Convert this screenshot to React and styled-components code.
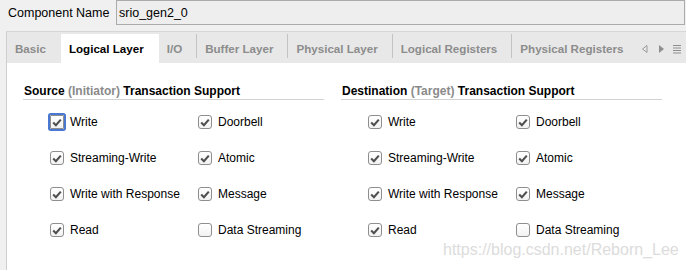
import React from 'react';
import styled, { createGlobalStyle } from 'styled-components';

const GlobalStyle = createGlobalStyle`
  body {
    margin: 0;
    background: #f0f0f0;
    font-family: "Liberation Sans", Arial, sans-serif;
    font-size: 12px;
    color: #000;
  }
`;

const Page = styled.div`
  width: 686px;
  height: 270px;
  overflow: hidden;
  display: flex;
  flex-direction: column;
  background: #f0f0f0;
`;

const NameRow = styled.div`
  display: flex;
  align-items: center;
  height: 26px;
  padding-left: 8px;
`;

const NameLabel = styled.span`
  width: 108px;
  font-size: 12.5px;
`;

const NameInput = styled.div`
  box-sizing: border-box;
  width: 569px;
  height: 25px;
  margin-top: -1px;
  display: flex;
  align-items: center;
  padding-left: 2px;
  background: #eeeeee;
  border: 1px solid #ababab;
  font-size: 12.5px;
`;

const Panel = styled.div`
  flex: 1;
  margin-top: 5px;
  margin-left: 6px;
  display: flex;
  flex-direction: column;
  border-left: 1px solid #cfcfcf;
  border-top: 1px solid #d6d6d6;
`;

const TabBar = styled.div`
  height: 31px;
  display: flex;
  align-items: flex-end;
  background: #e8e8e8;
`;

const Tab = styled.div`
  position: relative;
  flex-shrink: 0;
  height: 29px;
  display: flex;
  align-items: center;
  padding: 0 15px 0 8px;
  font-size: 11.6px;
  font-weight: bold;
  color: ${(p) => (p.active ? '#000' : '#8c8c8c')};
  background: ${(p) => (p.active ? '#fff' : 'transparent')};
  white-space: nowrap;

  &::after {
    content: '';
    display: ${(p) => (p.sep ? 'block' : 'none')};
    position: absolute;
    right: 0;
    top: 0;
    bottom: 5px;
    width: 1px;
    background: #c4c4c4;
  }
`;

const TabTools = styled.div`
  margin-left: auto;
  flex-shrink: 0;
  height: 29px;
  display: flex;
  align-items: center;
  padding-right: 4px;

  svg {
    display: block;
  }
`;

const Content = styled.div`
  position: relative;
  flex: 1;
  background: #fff;
  display: flex;
  padding: 20px 0 0 16px;
  gap: 17px;
`;

const Section = styled.div`
  width: ${(p) => p.width}px;
`;

const SectionTitle = styled.div`
  line-height: 16px;
  font-weight: bold;
  border-bottom: 1px solid #d2d2d2;
  padding-left: 1px;
`;

const Muted = styled.span`
  color: #8a8a8a;
`;

const Options = styled.div`
  margin-top: 4px;
  padding-left: 27px;
  display: grid;
  grid-template-columns: 148px 1fr;
  grid-auto-rows: 36px;
`;

const Option = styled.label`
  display: flex;
  align-items: center;
  gap: 6px;
  white-space: nowrap;
`;

const Box = styled.span`
  box-sizing: border-box;
  width: 14px;
  height: 14px;
  display: flex;
  align-items: center;
  justify-content: center;
  border: 1px solid #8e8e8e;
  background: linear-gradient(#ffffff, #f2f2f2);
  box-shadow: ${(p) => (p.focus ? '0 0 0 2px #4a78d0' : 'none')};
  border-radius: ${(p) => (p.focus ? '1px' : '3px')};
`;

const Watermark = styled.div`
  position: absolute;
  left: 436px;
  top: 178px;
  font-size: 16px;
  color: #dcdcdc;
  pointer-events: none;
`;

const CheckBox = ({ checked, focus }) => (
  <Box focus={focus}>
    {checked && (
      <svg width="10" height="9" viewBox="0 0 10 9">
        <path d="M1.2 4.6 L3.9 7.2 L8.8 1.6" fill="none" stroke="#4f4f4f" strokeWidth="2.1" />
      </svg>
    )}
  </Box>
);

const tabs = [
  { name: 'Basic' },
  { name: 'Logical Layer', active: true },
  { name: 'I/O', sep: true },
  { name: 'Buffer Layer', sep: true },
  { name: 'Physical Layer', sep: true },
  { name: 'Logical Registers', sep: true },
  { name: 'Physical Registers' },
];

const options = [
  ['Write', true],
  ['Doorbell', true],
  ['Streaming-Write', true],
  ['Atomic', true],
  ['Write with Response', true],
  ['Message', true],
  ['Read', true],
  ['Data Streaming', false],
];

const OptionGrid = ({ focusFirst }) => (
  <Options>
    {options.map(([label, checked], i) => (
      <Option key={label}>
        <CheckBox checked={checked} focus={focusFirst && i === 0} />
        {label}
      </Option>
    ))}
  </Options>
);

const App = () => (
  <Page>
    <GlobalStyle />
    <NameRow>
      <NameLabel>Component Name</NameLabel>
      <NameInput>srio_gen2_0</NameInput>
    </NameRow>
    <Panel>
      <TabBar>
        {tabs.map((t) => (
          <Tab key={t.name} active={t.active} sep={t.sep}>
            {t.name}
          </Tab>
        ))}
        <TabTools>
          <svg width="14" height="12" viewBox="0 0 14 12">
            <path d="M7 2.5 L2.5 6 L7 9.5 Z" fill="none" stroke="#9a9a9a" strokeWidth="1" />
          </svg>
          <svg width="16" height="12" viewBox="0 0 16 12">
            <path d="M5 2 L10 6 L5 10 Z" fill="#8f8f8f" />
          </svg>
          <svg width="12" height="12" viewBox="0 0 12 12">
            <path d="M3 2.5 H11 M3 5 H11 M3 7.5 H11 M3 10 H11" stroke="#8f8f8f" strokeWidth="1.2" />
          </svg>
        </TabTools>
      </TabBar>
      <Content>
        <Section width={301}>
          <SectionTitle>
            Source <Muted>(Initiator)</Muted> Transaction Support
          </SectionTitle>
          <OptionGrid focusFirst />
        </Section>
        <Section width={321}>
          <SectionTitle>
            Destination <Muted>(Target)</Muted> Transaction Support
          </SectionTitle>
          <OptionGrid />
        </Section>
        <Watermark>https://blog.csdn.net/Reborn_Lee</Watermark>
      </Content>
    </Panel>
  </Page>
);

export default App;
